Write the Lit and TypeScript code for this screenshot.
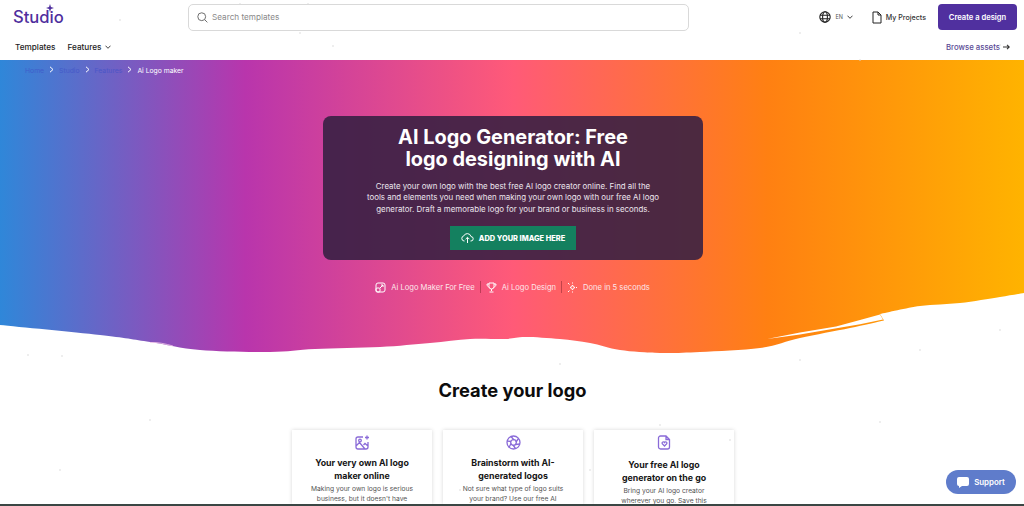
import { LitElement, html, css, svg } from "lit";
import { customElement } from "lit/decorators.js";

const specks: [number, number][] = [[300,33],[333,46],[240,4],[308,4],[1000,45],[120,20],[800,33],[860,60],[62,356],[28,355],[800,360],[920,350],[660,425],[880,422],[460,490],[590,470],[730,440],[150,420],[60,470],[560,364],[1000,330]];

// Brush edge of the hero, in page pixels; the hero starts at y = 60.
const smooth = (pts: [number, number][]) => {
  let d = "";
  for (let i = 0; i < pts.length - 1; i++) {
    const p0 = pts[Math.max(i - 1, 0)], p1 = pts[i], p2 = pts[i + 1], p3 = pts[Math.min(i + 2, pts.length - 1)];
    const c1 = [p1[0] + (p2[0] - p0[0]) / 6, p1[1] + (p2[1] - p0[1]) / 6 - 60];
    const c2 = [p2[0] - (p3[0] - p1[0]) / 6, p2[1] - (p3[1] - p1[1]) / 6 - 60];
    d += `C${c1[0].toFixed(1)} ${c1[1].toFixed(1)} ${c2[0].toFixed(1)} ${c2[1].toFixed(1)} ${p2[0]} ${p2[1] - 60}`;
  }
  return d;
};
const rightEdge: [number, number][] = [[1024,293],[1000,297],[960,303],[920,306],[880,314]];
const leftEdge: [number, number][] = [[884,320.5],[850,328],[800,338],[760,348],[700,352],[660,353],[620,350],[590,343],[560,339],[525,337],[505,339],[470,339],[430,343],[380,347],[315,349],[270,352],[200,350],[150,342],[100,335],[0,325]];
const heroPath = `M0 0H1024V233${smooth(rightEdge)}L884 260.500${smooth(leftEdge)}Z`;

@customElement("app-root")
export class AppRoot extends LitElement {
  static styles = css`
    :host { display: block; height: 506px; overflow: hidden; position: relative; background: #fff;
      font-family: Inter, "Liberation Sans", sans-serif; color: #111; }
    .top { height: 34px; display: flex; align-items: center; padding: 0 7px 0 13px; }
    .logo { position: relative; font: 500 16.6px/1 Inter, sans-serif; color: #4f2f9e; width: 175px; }
    .spark { position: absolute; left: 33px; top: -5px; width: 8px; height: 8px; fill: #4f2f9e; }
    .search { width: 501px; height: 27px; box-sizing: border-box; border: 1px solid #d9d9d9; border-radius: 5px;
      display: flex; align-items: center; gap: 4px; padding-left: 8px; font-size: 8.2px; color: #8a8a8a; }
    .search svg { width: 11px; height: 11px; stroke: #666; fill: none; stroke-width: 1.2; }
    .right { margin-left: auto; display: flex; align-items: center; }
    .lang { display: flex; align-items: center; gap: 4px; font-size: 5.5px; color: #555; margin-right: 19px; }
    .lang .globe { width: 12px; height: 12px; stroke: #222; fill: none; stroke-width: 1.1; }
    .chev { width: 6px; height: 4px; stroke: #444; fill: none; stroke-width: 1; }
    .proj { display: flex; align-items: center; gap: 4px; font-size: 7.1px; color: #333; font-weight: 500; margin-right: 12px; }
    .proj svg { width: 10px; height: 13px; stroke: #222; fill: none; stroke-width: 1; }
    .cta { width: 79px; height: 26px; background: #50309f; color: #fff; border-radius: 4px; font-size: 7.6px; font-weight: 600;
      display: flex; align-items: center; justify-content: center; }
    .nav { height: 26px; display: flex; align-items: center; padding: 0 14px 0 15px; font-size: 8.2px; font-weight: 500; color: #222; gap: 12px; }
    .feat { display: flex; align-items: center; gap: 3px; }
    .browse { margin-left: auto; display: flex; align-items: center; gap: 3px; color: #5a4a95; font-size: 7.8px; }
    .browse svg { width: 7px; height: 6px; stroke: #333; fill: none; stroke-width: 1.1; }
    .hero { position: relative; height: 295px; display: flex; flex-direction: column; align-items: center; }
    .wave { position: absolute; inset: 0; width: 100%; height: 100%; }
    .crumbs { position: relative; align-self: stretch; display: flex; gap: 5px; padding: 6px 0 0 25px; font-size: 6.8px; line-height: 9px; color: #fff; }
    .crumbs .dim { color: #3f51c8; opacity: .7; }
    .panel { position: relative; margin: 41px 0 0 2px; width: 380px; height: 144px; box-sizing: border-box; background: rgba(54,32,66,.89);
      border-radius: 8px; color: #fff; display: flex; flex-direction: column; align-items: center; padding-top: 11px; }
    h1 { margin: 0; font-size: 19.9px; line-height: 21.5px; font-weight: 700; text-align: center; }
    .panel p { margin: 11px 0 0; font-size: 7.9px; line-height: 11.4px; text-align: center; color: #ece6ee; }
    .add { margin-top: 11px; width: 126px; height: 24px; background: #14805f; display: flex; align-items: center; justify-content: center;
      gap: 5px; font-size: 7.4px; font-weight: 800; }
    .add svg { width: 13px; height: 12px; stroke: #fff; fill: none; stroke-width: 1; }
    .feats { position: relative; margin: 21px 0 0 1px; display: flex; align-items: center; font-size: 7.6px; color: #fde6ea; }
    .feats > span { display: flex; align-items: center; gap: 5px; padding: 0 5px 0 5px; height: 12px; }
    .feats > span + span { border-left: 1px solid rgba(120,30,40,.45); }
    .feats svg { width: 11px; height: 11px; stroke: #fff; fill: none; stroke-width: 1; }
    h2 { margin: 24px 0 0 1px; text-align: center; font-size: 18.3px; line-height: 22px; font-weight: 700; color: #0c0c0c; }
    .cards { margin: 29px 0 0 292px; display: flex; gap: 11px; align-items: flex-start; }
    .card { width: 140px; height: 74px; overflow: hidden; box-sizing: border-box; box-shadow: 0 0 4px rgba(0,0,0,.16); text-align: center; padding-top: 5px; }
    .card svg { display: block; margin: 0 auto; width: 15px; height: 15px; stroke: #8a6bd8; fill: none; stroke-width: 1.3; }
    .card h3 { margin: 6px 0 0; font-size: 8.8px; line-height: 13px; font-weight: 700; color: #151515; }
    .card p { margin: 2px 0 0; font-size: 6.7px; line-height: 10px; color: #555; }
    .card.low h3 { margin-top: 8px; }
    .support { position: absolute; left: 946px; top: 470px; width: 70px; height: 24px; background: #5f7ccb; border-radius: 12px; color: #fff;
      font-size: 7.9px; font-weight: 600; display: flex; align-items: center; justify-content: center; gap: 5px; }
    .support svg { width: 12px; height: 11px; fill: #fff; }
    .taskbar { position: absolute; left: 0; right: 0; bottom: 0; height: 2px; background: #3a4644; }
    .specks { position: absolute; inset: 0; width: 100%; height: 100%; pointer-events: none; fill: #d8d8d8; }
  `;

  render() {
    const chev = html`<svg class="chev" viewBox="0 0 6 4"><path d="M.5.7 3 3.3 5.5.7"/></svg>`;
    const sep = html`<svg width="5" height="7" viewBox="0 0 5 7" fill="none" stroke="#fff" stroke-width="1"><path d="M1 .8 4 3.5 1 6.2"/></svg>`;
    return html`
      <div class="top">
        <div class="logo">Studio<svg class="spark" viewBox="0 0 10 10"><path d="M5 0 6.200 3.800 10 5 6.200 6.200 5 10 3.800 6.200 0 5 3.800 3.800Z"/></svg></div>
        <div class="search"><svg viewBox="0 0 14 14"><circle cx="6" cy="6" r="5"/><path d="m9.800 9.800 3.400 3.400"/></svg>Search templates</div>
        <div class="right">
          <div class="lang"><svg class="globe" viewBox="0 0 12 12"><circle cx="6" cy="6" r="5.200"/><ellipse cx="6" cy="6" rx="2.400" ry="5.200"/><path d="M1 4.200h10M1 7.800h10"/></svg>EN ${chev}</div>
          <div class="proj"><svg viewBox="0 0 10 13"><path d="M1 1h5l3 3v8H1zM6 1v3h3"/></svg>My Projects</div>
          <div class="cta">Create a design</div>
        </div>
      </div>
      <div class="nav">
        <span>Templates</span><span class="feat">Features ${chev}</span>
        <span class="browse">Browse assets <svg viewBox="0 0 7 6"><path d="M0 3h6.200M4 .8 6.300 3 4 5.200"/></svg></span>
      </div>
      <section class="hero">
        <svg class="wave" viewBox="0 0 1024 295" preserveAspectRatio="none">
          <defs><linearGradient id="g"><stop offset="0" stop-color="#2f87d9"/><stop offset=".24" stop-color="#b935ac"/><stop offset=".5" stop-color="#ff5a78"/><stop offset=".75" stop-color="#ff8012"/><stop offset="1" stop-color="#ffb300"/></linearGradient></defs>
          <path fill="url(#g)" d=${heroPath}/>
          <path fill="#fff" d="M767 279 800 272.500 836 266.500 860 260 880 254.500 883 259.500 860 264.200 838 268 800 274.500Z"/>
          <path fill="none" stroke="#f4c8ea" stroke-width=".8" d="M150 282.500C158 282 166 284 173 286"/>
        </svg>
        <div class="crumbs"><span class="dim">Home</span>${sep}<span class="dim">Studio</span>${sep}<span class="dim">Features</span>${sep}<span>Ai Logo maker</span></div>
        <div class="panel">
          <h1>AI Logo Generator: Free<br>logo designing with AI</h1>
          <p>Create your own logo with the best free AI logo creator online. Find all the<br>tools and elements you need when making your own logo with our free AI logo<br>generator. Draft a memorable logo for your brand or business in seconds.</p>
          <div class="add"><svg viewBox="0 0 13 12"><path d="M3.500 9H3A2.600 2.600 0 0 1 2.800 3.900 3.800 3.800 0 0 1 10 4.600 2.200 2.200 0 0 1 10 9h-.5M6.500 11V5.500M4.600 7.200 6.500 5.300l1.900 1.900"/></svg>ADD YOUR IMAGE HERE</div>
        </div>
        <div class="feats">
          <span><svg viewBox="0 0 11 11"><rect x="1" y="1" width="9" height="9" rx="2"/><rect x="1" y="6" width="4" height="4" rx="1"/><path d="M5 6 8 3M6 3h2v2"/></svg>Ai Logo Maker For Free</span>
          <span><svg viewBox="0 0 11 11"><path d="M3 1h5v3.500a2.500 2.500 0 0 1-5 0zM3 2H1c0 2 1 3 2 3M8 2h2c0 2-1 3-2 3M5.500 7v2M3.500 10h4"/></svg>Ai Logo Design</span>
          <span><svg viewBox="0 0 11 11"><path d="M5.500 3 6.300 4.700 8 5.500 6.300 6.300 5.500 8 4.700 6.300 3 5.500 4.700 4.700ZM1 1l1.500 1.500M1 10l1.500-1.500M5.500 .5v1M5.500 9.500v1M10 5.500H9"/></svg>Done in 5 seconds</span>
        </div>
      </section>
      <h2>Create your logo</h2>
      <div class="cards">
        <div class="card">
          <svg viewBox="0 0 15 15"><path d="M8 2H3a2 2 0 0 0-2 2v8a2 2 0 0 0 2 2h8a2 2 0 0 0 2-2V7M1 11l3.500-3.500 5.500 6.500M8.500 10 10 8.500 13 11M12 .5v4M10 2.500h4"/><circle cx="5" cy="5.500" r="1.300"/></svg>
          <h3>Your very own AI logo<br>maker online</h3>
          <p>Making your own logo is serious<br>business, but it doesn't have</p>
        </div>
        <div class="card">
          <svg viewBox="0 0 15 15"><circle cx="7.500" cy="7.500" r="6.500"/><circle cx="7.500" cy="7.500" r="2.800"/><path d="M5 1.500 8 5M12.500 3.500 10 7M14 9 9.500 9.500M9.500 13.500 7 10M3 12.500 5 8.500M1 6l4 .5"/></svg>
          <h3>Brainstorm with AI-<br>generated logos</h3>
          <p>Not sure what type of logo suits<br>your brand? Use our free AI</p>
        </div>
        <div class="card low">
          <svg viewBox="0 0 15 15"><path d="M3.500 1H9l3.500 3.500V12a2 2 0 0 1-2 2h-7a2 2 0 0 1-2-2V3a2 2 0 0 1 2-2ZM9 1v3.500h3.500M7.500 11 5.200 8.700a1.300 1.300 0 0 1 2.300-1.200 1.300 1.300 0 0 1 2.300 1.200Z"/></svg>
          <h3>Your free AI logo<br>generator on the go</h3>
          <p>Bring your AI logo creator<br>wherever you go. Save this</p>
        </div>
      </div>
      <svg class="specks" viewBox="0 0 1024 506">${specks.map(([x, y]) => svg`<circle cx=${x} cy=${y} r=".8"/>`)}</svg>
      <div class="support"><svg viewBox="0 0 12 11"><path d="M2 0h8a2 2 0 0 1 2 2v5a2 2 0 0 1-2 2H5l-3 2V9a2 2 0 0 1-2-2V2a2 2 0 0 1 2-2Z"/></svg>Support</div>
      <div class="taskbar"></div>
    `;
  }
}
